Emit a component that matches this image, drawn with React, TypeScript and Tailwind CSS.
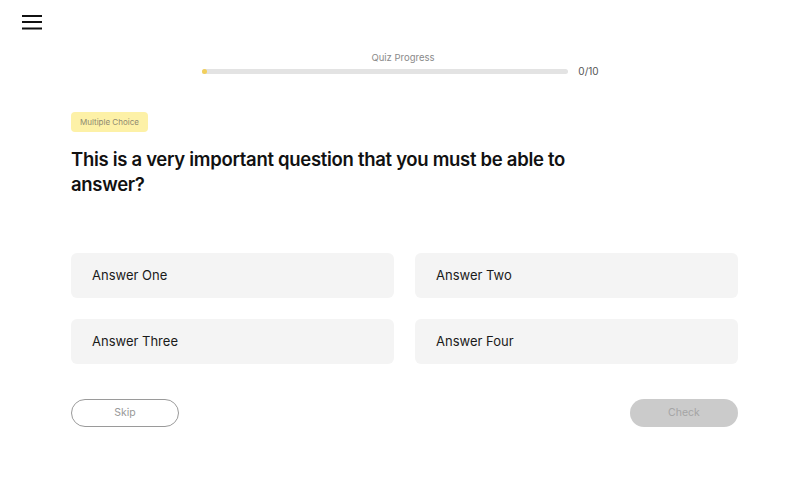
const answers = ['Answer One', 'Answer Two', 'Answer Three', 'Answer Four']

function Hamburger() {
  return (
    <svg width="20" height="16" viewBox="0 0 20 16" aria-hidden="true">
      <line x1="0" y1="2" x2="20" y2="2" stroke="#111" strokeWidth="2" />
      <line x1="0" y1="8" x2="20" y2="8" stroke="#111" strokeWidth="2" />
      <line x1="0" y1="14.5" x2="20" y2="14.5" stroke="#111" strokeWidth="2" />
    </svg>
  )
}

export default function App() {
  return (
    <div
      className="relative w-[806px] h-[479px] bg-white text-[#111]"
      style={{ fontFamily: 'Inter, "Noto Sans", sans-serif' }}
    >
      {/* Menu button */}
      <button className="absolute left-[22px] top-[14px]" aria-label="Menu">
        <Hamburger />
      </button>

      {/* Progress */}
      <div className="flex flex-col items-center pt-[52px]">
        <p className="text-[9.5px] leading-[12px] text-[#8a8a8a]">Quiz Progress</p>
        <div className="mt-[1px] mr-[5px] flex items-center gap-[10px]">
          <div className="w-[366px] h-[5px] rounded-full bg-[#e3e3e3]">
            <div className="w-[5px] h-[5px] rounded-full bg-[#f2cf5b]" />
          </div>
          <span className="text-[10px] leading-[12px] text-[#555]">0/10</span>
        </div>
      </div>

      {/* Question */}
      <div className="pl-[71px] pr-[68px] pt-[30px]">
        <span className="inline-flex items-center h-[20px] px-[9px] rounded-[4px] bg-[#fdf1a7] text-[8px] text-[#8f8a70]">
          Multiple Choice
        </span>
        <h1 className="mt-[15px] max-w-[520px] text-[18.5px] leading-[25px] font-semibold tracking-[-0.3px]">
          This is a very important question that you must be able to answer?
        </h1>

        <div className="mt-[56px] grid grid-cols-2 gap-x-[21px] gap-y-[21px]">
          {answers.map((a) => (
            <button
              key={a}
              className="h-[45px] rounded-[6px] bg-[#f4f4f4] pl-[21px] text-left text-[13px] text-[#1a1a1a]"
            >
              {a}
            </button>
          ))}
        </div>

        <div className="mt-[35px] flex items-center justify-between">
          <button className="w-[108px] h-[28px] rounded-full border border-[#9a9a9a] text-[10.5px] text-[#999]">
            Skip
          </button>
          <button className="w-[108px] h-[28px] rounded-full bg-[#cbcbcb] text-[10.5px] text-[#a5a5a5]">
            Check
          </button>
        </div>
      </div>
    </div>
  )
}
